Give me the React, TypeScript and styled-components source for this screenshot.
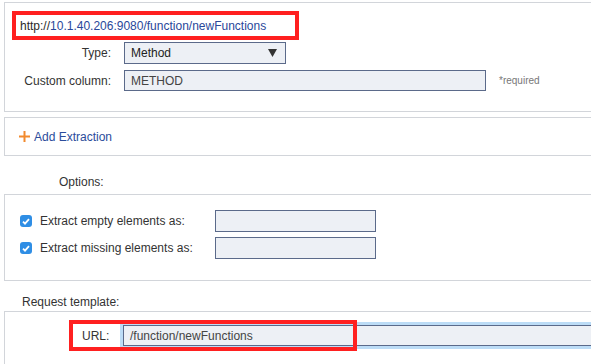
import React from 'react';
import styled, { createGlobalStyle } from 'styled-components';

const GlobalStyle = createGlobalStyle`
  html, body {
    margin: 0;
    padding: 0;
    background: #ffffff;
    overflow: hidden;
  }
  body {
    font-family: "Liberation Sans", Arial, sans-serif;
    font-size: 12px;
    color: #333333;
  }
`;

const Page = styled.div`
  padding: 2px 0 0 4px;
`;

// panels run off the right side of the screenshot, so no right edge
const Panel = styled.section<{ $gap?: number }>`
  border: 1px solid #d2d5da;
  border-right: none;
  margin-top: ${p => p.$gap ?? 0}px;
`;

const TopPanel = styled(Panel)`
  padding: 8px 0 20px 0;
`;

const Highlight = styled.div`
  display: inline-flex;
  align-items: center;
  box-sizing: border-box;
  margin-left: 7px;
  width: 287px;
  height: 29px;
  padding-left: 4px;
  border: 4px solid #ff2020;
`;

const Scheme = styled.span`
  color: #2a2a2a;
`;

const Host = styled.span`
  color: #29479a;
`;

const FormRow = styled.div<{ $top: number }>`
  display: grid;
  grid-template-columns: 106px 362px auto;
  column-gap: 13px;
  align-items: center;
  margin-top: ${p => p.$top}px;
`;

const FieldLabel = styled.label`
  text-align: right;
  color: #333;
`;

const SelectBox = styled.div`
  box-sizing: border-box;
  width: 162px;
  height: 22px;
  display: flex;
  align-items: center;
  justify-content: space-between;
  padding: 0 8px 0 6px;
  background: #edf0f5;
  border: 1px solid #5b6a8a;
  color: #222;
`;

const TextBox = styled.div<{ $w?: string; $h?: number }>`
  box-sizing: border-box;
  width: ${p => p.$w ?? '100%'};
  height: ${p => p.$h ?? 22}px;
  display: flex;
  align-items: center;
  padding-left: 6px;
  background: #edf0f5;
  border: 1px solid #5b6a8a;
  color: #444;
`;

const Hint = styled.span`
  font-size: 10px;
  color: #777;
`;

const ActionPanel = styled(Panel)`
  height: 37px;
  display: flex;
  align-items: center;
  padding-left: 14px;
  gap: 4px;
`;

const ActionLink = styled.span`
  color: #2b4c9b;
`;

const SectionTitle = styled.div<{ $pad: string }>`
  padding: ${p => p.$pad};
  line-height: 15px;
  color: #333;
`;

const OptionsPanel = styled(Panel)`
  padding: 15px 0 21px 15px;
  display: flex;
  flex-direction: column;
  gap: 5px;
`;

const OptionRow = styled.div`
  display: grid;
  grid-template-columns: 12px 167px 161px;
  column-gap: 8px;
  align-items: center;
`;

const Check = styled.span`
  width: 12px;
  height: 12px;
  border-radius: 3px;
  background: #2f8ee5;
  display: flex;
  align-items: center;
  justify-content: center;
`;

const RequestPanel = styled(Panel)`
  padding: 8px 0 14px 64px;
  overflow: hidden;
`;

const UrlRow = styled.div`
  position: relative;
  height: 31px;
  display: flex;
  align-items: center;
  padding-left: 13px;
  margin-right: -8px;
`;

const UrlLabel = styled.span`
  width: 41px;
  color: #333;
`;

const UrlInput = styled(TextBox)`
  flex: 1;
  height: 21px;
  color: #444;
  box-shadow: 0 0 0 3px #bcdcf6;
`;

const Marker = styled.div`
  position: absolute;
  left: 0;
  top: 0;
  width: 288px;
  height: 31px;
  box-sizing: border-box;
  border: 4px solid #ff2020;
  pointer-events: none;
`;

const Arrow = () => (
  <svg width="9" height="8" viewBox="0 0 9 8">
    <path d="M0 0h9L4.5 8z" fill="#333" />
  </svg>
);

const Plus = () => (
  <svg width="11" height="11" viewBox="0 0 11 11">
    <path d="M5.5 0v11M0 5.5h11" stroke="#f28a2e" strokeWidth="2" />
  </svg>
);

const Tick = () => (
  <svg width="8" height="7" viewBox="0 0 8 7">
    <path d="M1 3.6l2 2L7 1.2" fill="none" stroke="#fff" strokeWidth="1.8" />
  </svg>
);

const App = () => (
  <Page>
    <GlobalStyle />
    <TopPanel>
      <Highlight>
        <Scheme>http://</Scheme>
        <Host>10.1.40.206:9080/function/newFunctions</Host>
      </Highlight>
      <FormRow $top={2}>
        <FieldLabel>Type:</FieldLabel>
        <SelectBox>
          Method
          <Arrow />
        </SelectBox>
      </FormRow>
      <FormRow $top={6}>
        <FieldLabel>Custom column:</FieldLabel>
        <TextBox $h={21}>METHOD</TextBox>
        <Hint>*required</Hint>
      </FormRow>
    </TopPanel>

    <ActionPanel $gap={5}>
      <Plus />
      <ActionLink>Add Extraction</ActionLink>
    </ActionPanel>

    <SectionTitle $pad="19px 0 4px 55px">Options:</SectionTitle>
    <OptionsPanel>
      <OptionRow>
        <Check><Tick /></Check>
        <span>Extract empty elements as:</span>
        <TextBox />
      </OptionRow>
      <OptionRow>
        <Check><Tick /></Check>
        <span>Extract missing elements as:</span>
        <TextBox />
      </OptionRow>
    </OptionsPanel>

    <SectionTitle $pad="14px 0 1px 18px">Request template:</SectionTitle>
    <RequestPanel>
      <UrlRow>
        <UrlLabel>URL:</UrlLabel>
        <UrlInput>/function/newFunctions</UrlInput>
        <Marker />
      </UrlRow>
    </RequestPanel>
  </Page>
);

export default App;
